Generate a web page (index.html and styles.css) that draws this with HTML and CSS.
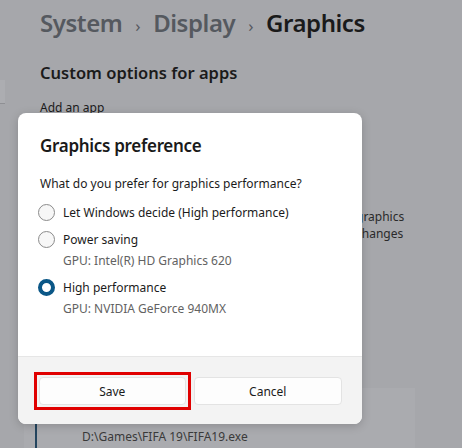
FILE: index.html
```html
<!DOCTYPE html>
<html>
<head>
<meta charset="utf-8">
<link rel="stylesheet" href="styles.css">
</head>
<body>
<div class="page">
  <div class="side-mark"></div>
  <h1 class="crumbs"><span class="crumb-dim">System</span><span class="sep">›</span><span class="crumb-dim">Display</span><span class="sep">›</span><span class="crumb-cur">Graphics</span></h1>
  <h2 class="section">Custom options for apps</h2>
  <div class="add-label">Add an app</div>
  <div class="behind-text">
    <div>graphics</div>
    <div>changes</div>
  </div>
  <div class="app-card">
    <div class="app-row">
      <div class="app-icon"></div>
      <div class="app-path">D:\Games\FIFA 19\FIFA19.exe</div>
    </div>
  </div>
</div>

<div class="dialog">
  <div class="dialog-body">
    <div class="dialog-title">Graphics preference</div>
    <div class="question">What do you prefer for graphics performance?</div>
    <div class="option opt1"><span class="radio"></span><span>Let Windows decide (High performance)</span></div>
    <div class="option opt2"><span class="radio"></span><span>Power saving</span></div>
    <div class="gpu gpu1">GPU: Intel(R) HD Graphics 620</div>
    <div class="option opt3"><span class="radio checked"></span><span>High performance</span></div>
    <div class="gpu gpu2">GPU: NVIDIA GeForce 940MX</div>
  </div>
  <div class="dialog-footer">
    <div class="highlight"><button class="btn btn-save">Save</button></div>
    <button class="btn btn-cancel">Cancel</button>
  </div>
</div>
</body>
</html>
```
FILE: styles.css
```css
* { box-sizing: border-box; }
html, body { margin: 0; padding: 0; }
body {
  width: 462px;
  height: 448px;
  overflow: hidden;
  background: #a6a7ab;
  font-family: "Noto Sans", "Open Sans", sans-serif;
  color: #1b1b1b;
  position: relative;
}
.page {
  padding: 7px 0 0 40px;
  position: relative;
  height: 448px;
  overflow: hidden;
}
.side-mark {
  position: absolute;
  left: 0;
  top: 80px;
  width: 5px;
  height: 24px;
  background: #acadb1;
  border-bottom: 1px solid #8f9094;
}
.crumbs {
  margin: 0;
  font-size: 24px;
  font-weight: 600;
  line-height: 32px;
  display: flex;
  align-items: baseline;
  letter-spacing: -0.45px;
}
.crumb-dim { color: #55595f; }
.crumb-cur { color: #1a1a1a; }
.sep {
  font-size: 17px;
  color: #55595f;
  margin: 0 13px;
  font-weight: 400;
}
.section {
  margin: 20px 0 0 0;
  font-size: 16.5px;
  font-weight: 600;
  line-height: 22px;
  color: #1b1b1b;
}
.add-label {
  margin-top: 16px;
  font-size: 12px;
  line-height: 16px;
  color: #1b1b1b;
}
.behind-text {
  margin: 92px 0 0 316px;
  font-size: 12px;
  line-height: 17px;
  color: #2a2a2a;
}
.app-card {
  margin: 146px 0 0 -16px;
  width: 391px;
  height: 62px;
  background: #aaabaf;
  padding: 33px 0 0 11px;
}
.app-row {
  display: flex;
  align-items: flex-start;
  gap: 7px;
}
.app-icon {
  width: 40px;
  height: 30px;
  border-left: 2px solid #24455f;
  border-top: 1px solid #4c6378;
}
.app-path {
  margin-top: 8px;
  font-size: 12px;
  line-height: 16px;
  color: #3a3a3a;
}

.dialog {
  position: absolute;
  left: 18px;
  top: 113px;
  width: 344px;
  height: 311px;
  background: #ffffff;
  border-radius: 8px;
  overflow: hidden;
  box-shadow: 0 2px 10px rgba(0,0,0,0.18);
  display: flex;
  flex-direction: column;
}
.dialog-body {
  flex: 1;
  padding: 20px 20px 0 22px;
}
.dialog-title {
  font-size: 17px;
  font-weight: 600;
  line-height: 26px;
  letter-spacing: -0.3px;
  color: #1a1a1a;
}
.question {
  margin-top: 17px;
  font-size: 12px;
  line-height: 16px;
  color: #1b1b1b;
}
.option {
  display: flex;
  align-items: center;
  gap: 8px;
  height: 24px;
  font-size: 12px;
  color: #1b1b1b;
  margin-left: -2px;
}
.opt1 { margin-top: 8px; }
.opt2 { margin-top: 3px; }
.opt3 { margin-top: 6px; }
.radio {
  width: 17px;
  height: 17px;
  border-radius: 50%;
  border: 1px solid #8b8b8b;
  background: #f7f7f7;
  flex: none;
}
.radio.checked {
  border: 4.5px solid #0b5787;
  background: #ffffff;
}
.gpu {
  margin-top: 2px;
  margin-left: 23px;
  font-size: 12px;
  line-height: 16px;
  color: #626262;
}
.dialog-footer {
  height: 68px;
  flex: none;
  background: #f3f3f3;
  border-top: 1px solid #e6e6e6;
  padding: 20px 20px 0 21px;
  display: flex;
  align-items: flex-start;
  gap: 8px;
}
.highlight {
  flex: 1;
  display: flex;
  margin: -5px -5px 0 -5px;
  padding: 2px;
  border: 3px solid #e00000;
}
.btn {
  flex: 1;
  height: 28px;
  background: #fdfdfd;
  border: 1px solid #e3e3e3;
  border-radius: 4px;
  font-family: inherit;
  font-size: 12px;
  color: #1b1b1b;
  padding: 0;
}
```
